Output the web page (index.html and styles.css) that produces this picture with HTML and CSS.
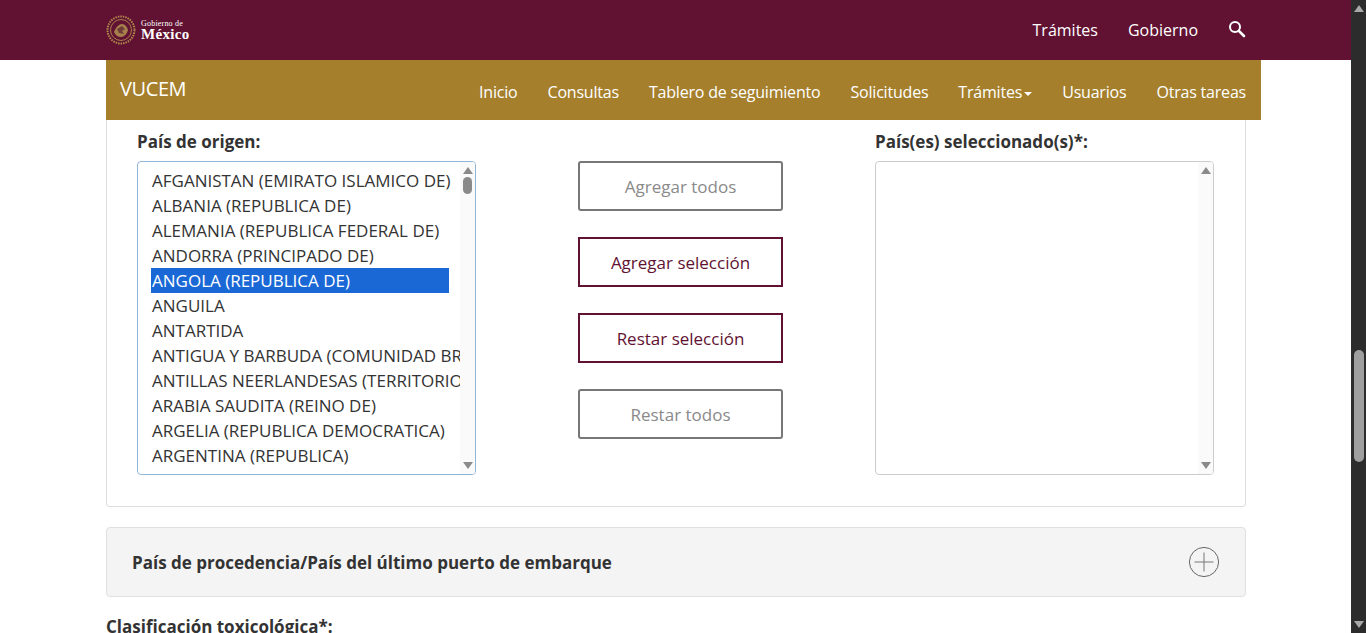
FILE: index.html
```html
<!DOCTYPE html>
<html lang="es">
<head>
    <meta charset="UTF-8">
    <meta name="viewport" content="width=device-width, initial-scale=1.0">
    <title>VUCEM</title>
    <link rel="stylesheet" href="styles.css">
</head>
<body>
    <div class="page">
        <header class="top-bar">
            <div class="logo">
                <svg class="logo-seal" viewBox="0 0 30 30" width="30" height="30">
                    <circle cx="15" cy="15" r="13.5" fill="none" stroke="#b08a4e" stroke-width="2" stroke-dasharray="1.5 1"/>
                    <circle cx="15" cy="15" r="10.5" fill="none" stroke="#a57f4a" stroke-width="1"/>
                    <path d="M8 17c2-5 5-8 8-8 3 0 5 3 6 6-1 4-4 7-7 7-3 0-6-2-7-5z" fill="#a5804c"/>
                    <path d="M11 14l5-3 3 3-3 2 2 3-5-1z" fill="#6d3a36"/>
                </svg>
                <div class="logo-text">
                    <span class="logo-small">Gobierno de</span>
                    <span class="logo-big">México</span>
                </div>
            </div>
            <nav class="top-links">
                <a>Trámites</a>
                <a>Gobierno</a>
                <svg class="search-icon" viewBox="0 0 18 18" width="18" height="18">
                    <circle cx="7" cy="7" r="5" fill="none" stroke="#fff" stroke-width="2"/>
                    <path d="M10.8 10.8L16 16" stroke="#fff" stroke-width="2.6" stroke-linecap="round"/>
                </svg>
            </nav>
        </header>

        <div class="content">
            <div class="sub-bar">
                <span class="brand">VUCEM</span>
                <nav class="sub-links">
                    <a>Inicio</a>
                    <a>Consultas</a>
                    <a>Tablero de seguimiento</a>
                    <a>Solicitudes</a>
                    <a>Trámites<i class="caret"></i></a>
                    <a>Usuarios</a>
                    <a>Otras tareas</a>
                </nav>
            </div>

            <section class="panel">
                <div class="col-list">
                    <label>País de origen:</label>
                    <div class="listbox focused">
                        <ul class="options">
                            <li>AFGANISTAN (EMIRATO ISLAMICO DE)</li>
                            <li>ALBANIA (REPUBLICA DE)</li>
                            <li>ALEMANIA (REPUBLICA FEDERAL DE)</li>
                            <li>ANDORRA (PRINCIPADO DE)</li>
                            <li class="selected">ANGOLA (REPUBLICA DE)</li>
                            <li>ANGUILA</li>
                            <li>ANTARTIDA</li>
                            <li>ANTIGUA Y BARBUDA (COMUNIDAD BRITANICA)</li>
                            <li>ANTILLAS NEERLANDESAS (TERRITORIO)</li>
                            <li>ARABIA SAUDITA (REINO DE)</li>
                            <li>ARGELIA (REPUBLICA DEMOCRATICA)</li>
                            <li>ARGENTINA (REPUBLICA)</li>
                        </ul>
                        <div class="mini-scroll">
                            <i class="arrow-up"></i>
                            <i class="mini-thumb"></i>
                            <i class="arrow-down"></i>
                        </div>
                    </div>
                </div>

                <div class="col-buttons">
                    <button class="btn">Agregar todos</button>
                    <button class="btn active">Agregar selección</button>
                    <button class="btn active">Restar selección</button>
                    <button class="btn">Restar todos</button>
                </div>

                <div class="col-list">
                    <label>País(es) seleccionado(s)*:</label>
                    <div class="listbox">
                        <ul class="options"></ul>
                        <div class="mini-scroll">
                            <i class="arrow-up"></i>
                            <i class="arrow-down"></i>
                        </div>
                    </div>
                </div>
            </section>

            <section class="accordion">
                <h3>País de procedencia/País del último puerto de embarque</h3>
                <svg class="plus-icon" viewBox="0 0 32 32" width="32" height="32">
                    <circle cx="16" cy="16" r="14.6" fill="none" stroke="#666" stroke-width="1"/>
                    <path d="M16 6.5v19M6.5 16h19" stroke="#777" stroke-width="1"/>
                </svg>
            </section>

            <label class="next-label">Clasificación toxicológica*:</label>
        </div>
    </div>

    <div class="page-scroll">
        <i class="arrow-up"></i>
        <i class="page-thumb"></i>
        <i class="arrow-down"></i>
    </div>
</body>
</html>
```

FILE: styles.css
```css
* {
    box-sizing: border-box;
}

html,
body {
    height: 100%;
    margin: 0;
    overflow: hidden;
}

body {
    display: flex;
    background: #fff;
    font-family: "Open Sans", "Noto Sans", sans-serif;
    color: #333;
}

.page {
    flex: 1;
    min-width: 0;
    height: 633px;
    overflow: hidden;
}

/* Barra superior */
.top-bar {
    display: flex;
    justify-content: space-between;
    align-items: center;
    height: 60px;
    padding: 0 105px 0 106px;
    background: #611232;
}

.logo {
    display: flex;
    align-items: center;
    gap: 5px;
}

.logo-text {
    display: flex;
    flex-direction: column;
    color: #fff;
    font-family: "Liberation Serif", serif;
}

.logo-small {
    font-size: 8px;
    line-height: 8px;
    letter-spacing: 0.2px;
}

.logo-big {
    font-size: 15px;
    line-height: 12px;
    font-weight: bold;
    letter-spacing: 0.3px;
}

.top-links {
    display: flex;
    align-items: center;
    gap: 30px;
    color: #fff;
    font-size: 16px;
}

.search-icon {
    margin-top: -3px;
}

/* Barra dorada */
.content {
    width: 1155px;
    margin-left: 106px;
}

.sub-bar {
    display: flex;
    justify-content: space-between;
    height: 60px;
    padding: 0 15px 0 14px;
    background: #a57f2c;
    color: #fff;
}

.brand {
    font-size: 20px;
    line-height: 58px;
    letter-spacing: -0.4px;
}

.sub-links {
    display: flex;
    gap: 30px;
    font-size: 16px;
    line-height: 64px;
    letter-spacing: -0.2px;
}

.caret {
    display: inline-block;
    margin-left: 2px;
    vertical-align: middle;
    border-top: 4px solid #fff;
    border-left: 4px solid transparent;
    border-right: 4px solid transparent;
}

/* Panel de paises */
.panel {
    display: flex;
    width: 1140px;
    height: 387px;
    padding: 10px 31px 0 30px;
    border: 1px solid #ddd;
    border-top: 0;
    border-radius: 0 0 4px 4px;
}

label {
    display: block;
    font-size: 17px;
    font-weight: 700;
    line-height: 24px;
}

.col-list label {
    margin-bottom: 7px;
}

.listbox {
    display: flex;
    width: 339px;
    height: 314px;
    overflow: hidden;
    border: 1px solid #ccc;
    border-radius: 4px;
}

.listbox.focused {
    border-color: #8fb6d8;
}

.options {
    flex: 1;
    min-width: 0;
    margin: 0;
    padding: 6px 0 0 13px;
    list-style: none;
    overflow: hidden;
    font-size: 17px;
    line-height: 25px;
}

.options li {
    width: 310px;
    padding-left: 1px;
    white-space: nowrap;
    overflow: hidden;
}

.options li.selected {
    width: 298px;
    background: #1a68d6;
    color: #fff;
}

.mini-scroll {
    display: flex;
    flex-direction: column;
    align-items: center;
    width: 15px;
    padding: 5px 0;
    background: #fafafa;
}

.mini-thumb {
    width: 9px;
    height: 17px;
    margin-top: 3px;
    background: #8a8a8a;
    border-radius: 5px;
}

.mini-scroll .arrow-down {
    margin-top: auto;
}

.arrow-up,
.arrow-down {
    display: block;
    border-left: 5px solid transparent;
    border-right: 5px solid transparent;
}

.arrow-up {
    border-bottom: 7px solid #8a8a8a;
}

.arrow-down {
    border-top: 7px solid #8a8a8a;
}

/* Botones centrales */
.col-buttons {
    display: flex;
    flex-direction: column;
    gap: 26px;
    width: 205px;
    margin: 31px 92px 0 102px;
}

.btn {
    height: 50px;
    padding: 0;
    background: #fff;
    border: 2px solid #777;
    border-radius: 3px;
    color: #8a8a8a;
    font-family: inherit;
    font-size: 17px;
}

.btn.active {
    border-color: #611232;
    border-radius: 0;
    color: #611232;
}

/* Acordeon */
.accordion {
    display: flex;
    justify-content: space-between;
    align-items: center;
    width: 1140px;
    height: 70px;
    margin-top: 20px;
    padding: 0 25px;
    background: #f4f4f4;
    border: 1px solid #e0e0e0;
    border-radius: 4px;
}

.accordion h3 {
    margin: 0;
    font-size: 17px;
    font-weight: 700;
    color: #333;
}

.next-label {
    margin-top: 18px;
}

/* Barra de scroll de la pagina */
.page-scroll {
    display: flex;
    flex-direction: column;
    align-items: center;
    flex: 0 0 15px;
    height: 633px;
    padding: 5px 0;
    background: #2c2c2c;
}

.page-thumb {
    width: 10px;
    height: 112px;
    margin-top: 338px;
    background: #9f9f9f;
    border-radius: 5px;
}

.page-scroll .arrow-down {
    margin-top: auto;
}

.page-scroll .arrow-up {
    border-bottom-color: #a8a8a8;
}

.page-scroll .arrow-down {
    border-top-color: #a8a8a8;
}
```
